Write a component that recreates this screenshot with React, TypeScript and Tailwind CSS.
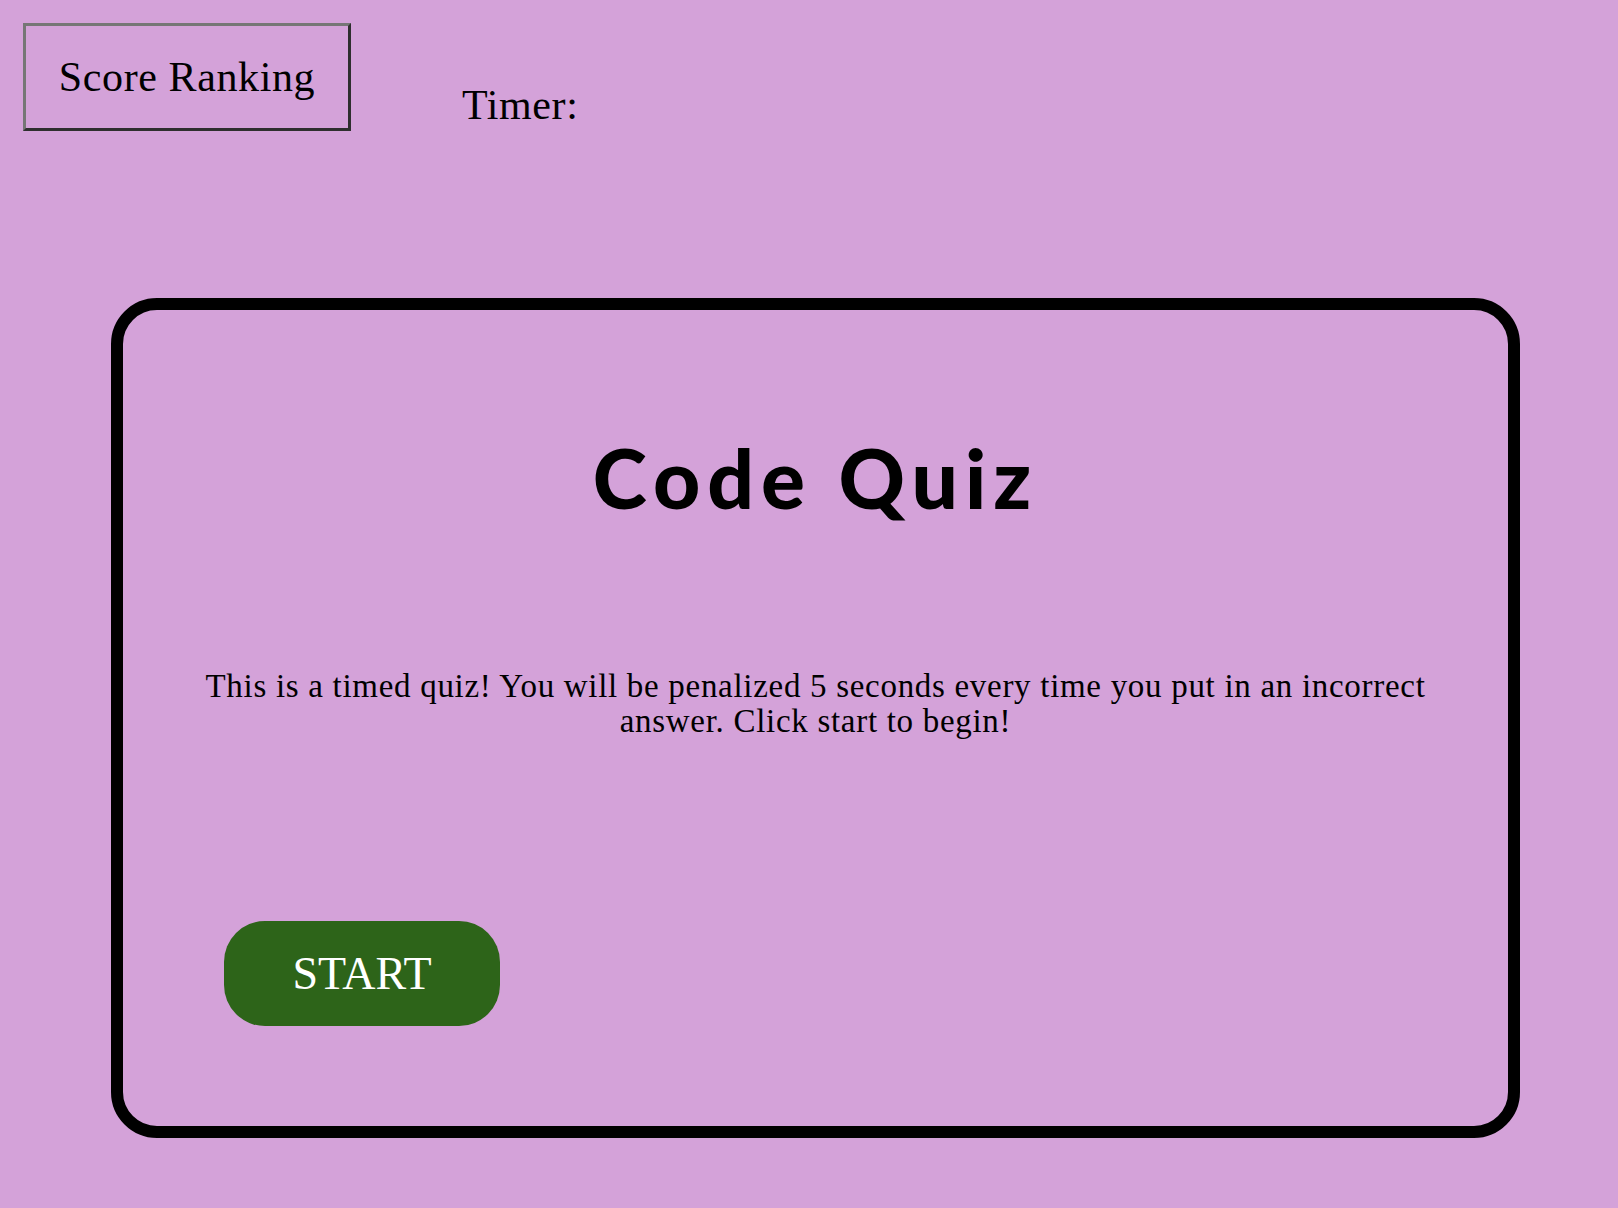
export default function App() {
  return (
    <div
      className="min-h-[1208px] w-full bg-[#d4a2d9] text-black"
      style={{ fontFamily: '"Liberation Serif", Georgia, serif' }}
    >
      {/* Header */}
      <header className="flex items-start">
        <button className="ml-[23px] mt-[23px] h-[108px] w-[328px] border-[3px] border-t-[#767676] border-l-[#767676] border-b-[#2e2e2e] border-r-[#2e2e2e] bg-transparent text-[42px] leading-none tracking-[0.6px]">
          Score Ranking
        </button>
        <p className="ml-[111px] mt-[84px] text-[42px] leading-none tracking-[0.6px]">Timer:</p>
      </header>

      {/* Quiz card */}
      <main className="ml-[111px] mt-[167px] w-[1409px] rounded-[46px] border-[12px] border-black">
        <h1
          className="pt-[126px] text-center text-[82px] font-black leading-none tracking-[7px]"
          style={{ fontFamily: 'Lato, "DejaVu Sans", sans-serif' }}
        >
          Code Quiz
        </h1>
        <p className="mx-auto mt-[151px] w-[1260px] text-center text-[33px] leading-[35px] tracking-[0.7px]">
          This is a timed quiz! You will be penalized 5 seconds every time you put in an incorrect
          answer. Click start to begin!
        </p>
        <div className="pb-[100px] pl-[101px] pt-[182px]">
          <button className="h-[105px] w-[276px] rounded-[41px] bg-[#2d6419] text-[46px] leading-none text-white">
            START
          </button>
        </div>
      </main>
    </div>
  );
}
